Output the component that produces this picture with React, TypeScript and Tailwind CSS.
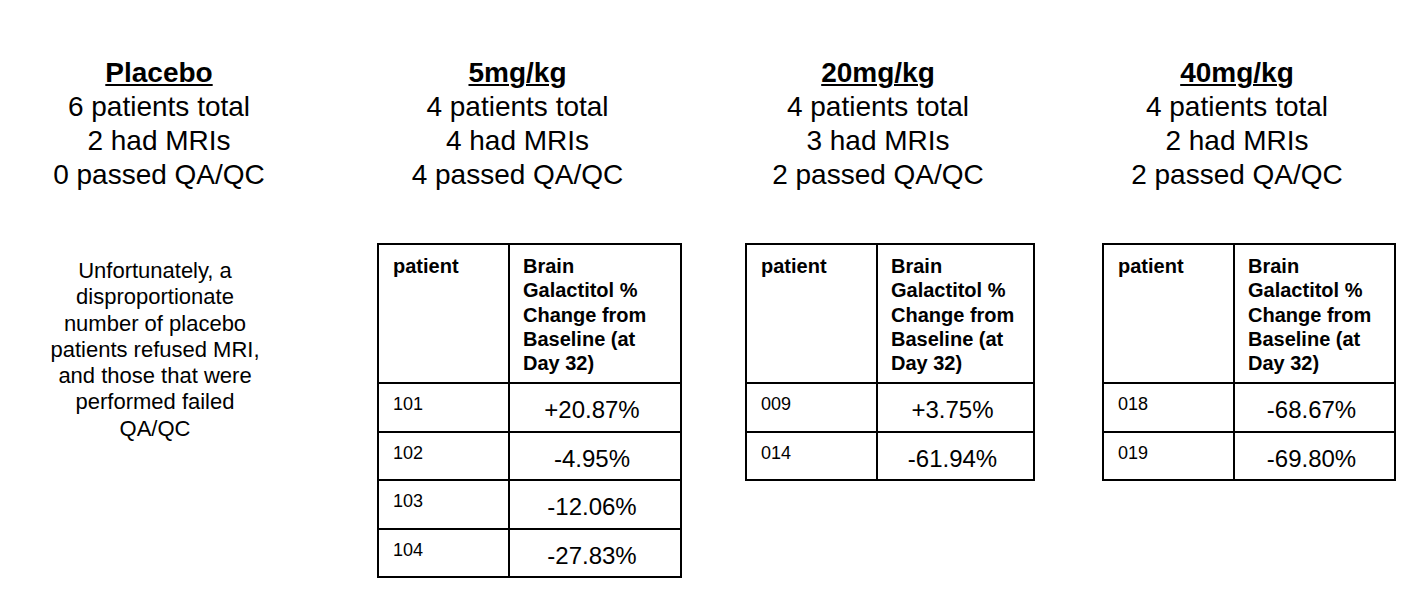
const font = "font-['Liberation_Sans',Arial,Helvetica,sans-serif]"

type Group = {
  dose: string
  total: string
  mris: string
  passed: string
  rows: { id: string; change: string }[]
  width: string
  gap: string
}

const groups: Group[] = [
  {
    dose: "5mg/kg",
    total: "4 patients total",
    mris: "4 had MRIs",
    passed: "4 passed QA/QC",
    width: "w-[305px]",
    gap: "ml-[99px]",
    rows: [
      { id: "101", change: "+20.87%" },
      { id: "102", change: "-4.95%" },
      { id: "103", change: "-12.06%" },
      { id: "104", change: "-27.83%" },
    ],
  },
  {
    dose: "20mg/kg",
    total: "4 patients total",
    mris: "3 had MRIs",
    passed: "2 passed QA/QC",
    width: "w-[290px]",
    gap: "ml-[63px]",
    rows: [
      { id: "009", change: "+3.75%" },
      { id: "014", change: "-61.94%" },
    ],
  },
  {
    dose: "40mg/kg",
    total: "4 patients total",
    mris: "2 had MRIs",
    passed: "2 passed QA/QC",
    width: "w-[294px]",
    gap: "ml-[67px]",
    rows: [
      { id: "018", change: "-68.67%" },
      { id: "019", change: "-69.80%" },
    ],
  },
]

function Summary({ dose, lines, className = "" }: { dose: string; lines: string[]; className?: string }) {
  return (
    <div className={`text-center text-[28px] leading-[34px] ${className}`}>
      <div className="font-bold underline decoration-2 underline-offset-2">{dose}</div>
      {lines.map((line) => (
        <div key={line}>{line}</div>
      ))}
    </div>
  )
}

function ResultTable({ rows }: { rows: Group["rows"] }) {
  return (
    <div className="mt-[51px] w-full border-2 border-black">
      <div className="flex h-[137px]">
        <div className="w-[131px] shrink-0 border-r-2 border-black pl-[14px] pt-[9px] text-[20px] leading-[24.3px] font-bold">
          patient
        </div>
        <div className="flex-1 pl-[13px] pt-[9px] text-[20px] leading-[24.3px] font-bold">
          <div className="max-w-[140px]">Brain Galactitol % Change from Baseline (at Day 32)</div>
        </div>
      </div>
      {rows.map((row) => (
        <div key={row.id} className="flex h-[48.5px] border-t-2 border-black">
          <div className="w-[131px] shrink-0 border-r-2 border-black pl-[14px] pt-[10px] text-[18px] leading-[20px]">
            {row.id}
          </div>
          <div className="flex flex-1 items-center justify-center pr-[6px] pt-[6px] text-[24px] leading-[28px]">
            {row.change}
          </div>
        </div>
      ))}
    </div>
  )
}

export default function App() {
  return (
    <div className={`flex h-[597px] w-[1420px] items-start bg-white pl-[40px] pt-[56px] text-black ${font}`}>
      <div className="flex w-[238px] shrink-0 flex-col">
        <Summary dose="Placebo" lines={["6 patients total", "2 had MRIs", "0 passed QA/QC"]} />
        <p className="mt-[66px] w-[230px] text-center text-[22px] leading-[26.3px]">
          Unfortunately, a disproportionate number of placebo patients refused MRI, and those that were performed
          failed QA/QC
        </p>
      </div>
      {groups.map((g) => (
        <div key={g.dose} className={`flex shrink-0 flex-col ${g.width} ${g.gap}`}>
          <Summary dose={g.dose} lines={[g.total, g.mris, g.passed]} className="pr-[24px]" />
          <ResultTable rows={g.rows} />
        </div>
      ))}
    </div>
  )
}
